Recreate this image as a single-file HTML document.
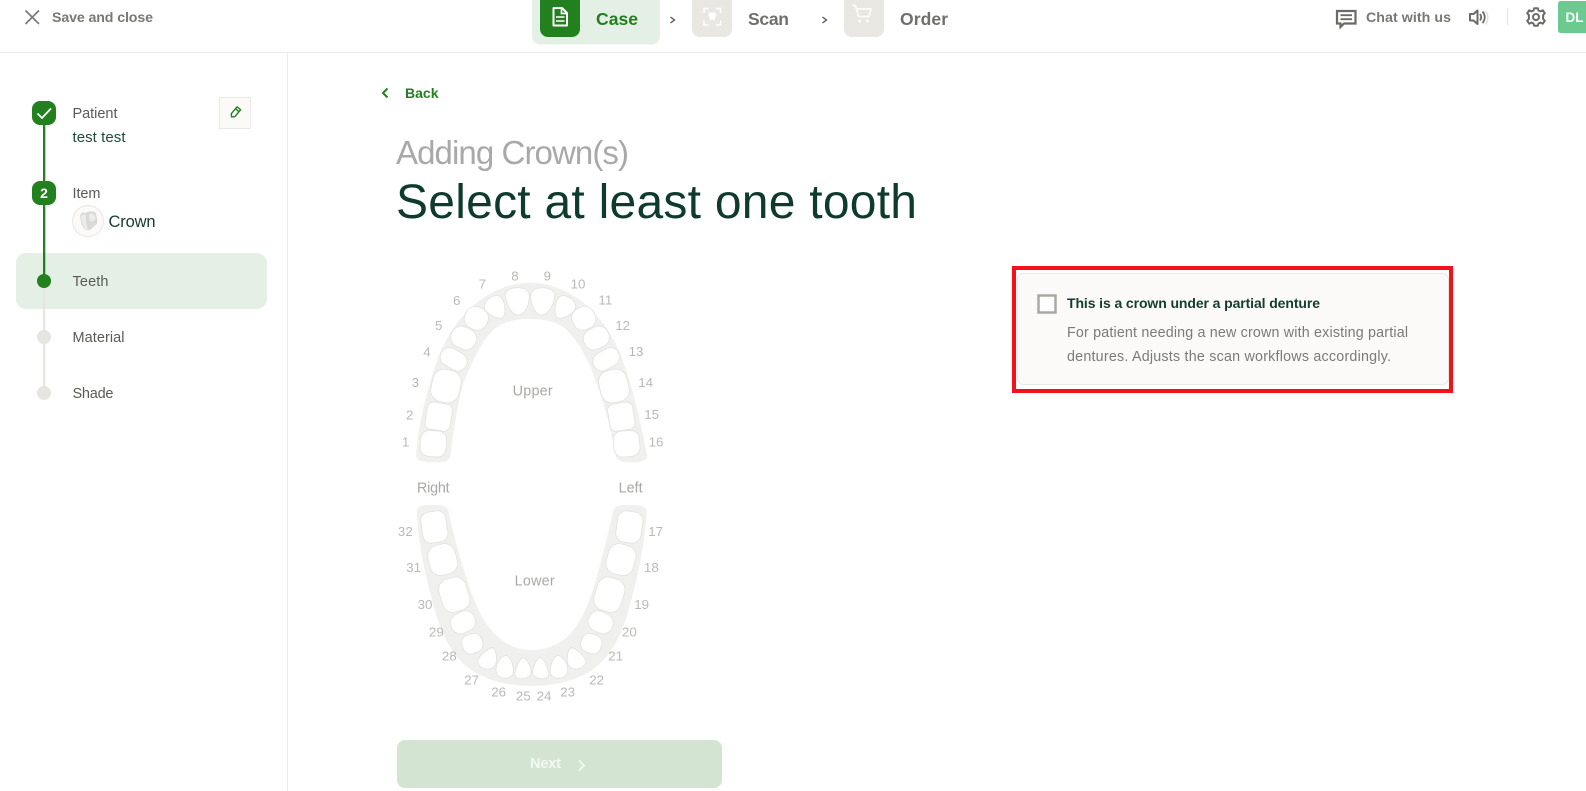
<!DOCTYPE html>
<html lang="en"><head><meta charset="utf-8"><title>Select at least one tooth</title>
<style>
html,body{margin:0;padding:0;background:#fff;width:1586px;height:791px;overflow:hidden}
svg{display:block;font-family:"Liberation Sans",sans-serif}
.nav{font-size:14.500px;fill:#5a5a56}
.num{font-size:40px;fill:#b9b9b6;text-anchor:middle}
.lab{font-size:43px;fill:#a8a8a5;text-anchor:middle}
.t rect,.t path{fill:#fff;stroke:#e2e2df;stroke-width:2.500}
</style></head><body>
<svg width="1586" height="791" viewBox="0 0 1586 791" xmlns="http://www.w3.org/2000/svg">
<defs>
<g id="ul" class="t">
<rect x="-39" y="-39" width="78" height="78" rx="26" transform="translate(130,551) rotate(5)"/>
<rect x="-38" y="-41" width="76" height="82" rx="18" transform="translate(146,470) rotate(9)"/>
<rect x="-43" y="-49" width="86" height="98" rx="34" transform="translate(168,378) rotate(12)"/>
<rect x="-42" y="-28" width="84" height="56" rx="27" transform="translate(191,298) rotate(30)"/>
<rect x="-39" y="-32" width="78" height="64" rx="30" transform="translate(221,234) rotate(25)"/>
<rect x="-35" y="-34" width="70" height="68" rx="30" transform="translate(259,175) rotate(25)"/>
<path d="M283 137C287 118 306 106 324 107C338 109 345 130 345 152C345 168 338 177 326 175C308 171 280 155 283 137Z"/>
<path d="M345 105C348 89 366 83 382 83C402 83 418 90 418 108C418 130 408 163 385 165C364 167 348 130 345 105Z"/>
</g>
<g id="ll" class="t">
<rect x="-38" y="-47" width="76" height="94" rx="26" transform="translate(133,171) rotate(-8)"/>
<rect x="-42" y="-46" width="84" height="92" rx="32" transform="translate(158,269) rotate(-15)"/>
<rect x="-42" y="-51" width="84" height="102" rx="32" transform="translate(193,374) rotate(-17)"/>
<rect x="-38" y="-31" width="76" height="62" rx="29" transform="translate(219,457) rotate(-25)"/>
<rect x="-31" y="-29" width="62" height="58" rx="24" transform="translate(247,521) rotate(-20)"/>
<path d="M263 572C270 555 292 535 308 533C320 540 322 572 316 585C308 600 285 600 272 590C265 584 261 578 263 572Z"/>
<path d="M318 597C320 577 335 555 350 557C364 563 372 592 370 608C366 625 345 628 332 623C323 617 317 608 318 597Z"/>
<path d="M375 608C378 590 390 563 400 563C410 563 425 592 423 610C421 628 385 630 378 622C375 618 374 613 375 608Z"/>
</g>
</defs>
<rect width="1586" height="791" fill="#fff"/>
<!-- header -->
<rect x="0" y="52" width="1586" height="1" fill="#ececea"/>
<rect x="287" y="52" width="1" height="739" fill="#ececea"/>
<path d="M25.500 10.500L39 24M39 10.500L25.500 24" stroke="#7a7a76" stroke-width="1.700" fill="none"/>
<text x="52" y="22" font-size="14.200" font-weight="700" fill="#777773" textLength="101" lengthAdjust="spacing">Save and close</text>

<rect x="532" y="-10" width="128" height="54.500" rx="8" fill="#e4f0e5"/>
<rect x="540" y="-10" width="40" height="47" rx="8" fill="#22801f"/>
<path d="M553.500 8H562L567 13V25.500H553.500Z" fill="none" stroke="#fff" stroke-width="2" stroke-linejoin="round"/>
<path d="M561.500 8V13.500H567" fill="none" stroke="#fff" stroke-width="1.700"/>
<path d="M556 17H564.500M556 21H564.500" stroke="#fff" stroke-width="1.600"/>
<text x="596" y="25" font-size="17.500" font-weight="700" fill="#22801f" textLength="42" lengthAdjust="spacing">Case</text>
<path d="M670.500 17L674.500 20L670.500 23" fill="none" stroke="#55554f" stroke-width="1.300"/>
<rect x="692" y="-10" width="40" height="47" rx="8" fill="#e8e7e2"/>
<path d="M704 13V8.500H708.500M716 8.500H720.500V13M720.500 20.500V25H716M708.500 25H704V20.500" fill="none" stroke="#fff" stroke-width="1.500"/>
<path d="M708.500 13.500C710 11.800 711 12.500 712.200 12.800C713.500 12.500 714.500 11.800 716 13.500C716.800 15.500 715 17 714.500 20.500C713.800 21.500 713 20 712.200 18.500C711.400 20 710.600 21.500 710 20.500C709.500 17 707.700 15.500 708.500 13.500Z" fill="#fff"/>
<text x="748" y="25" font-size="17.500" font-weight="700" fill="#6f6f6b" textLength="41" lengthAdjust="spacing">Scan</text>
<path d="M822.500 17L826.500 20L822.500 23" fill="none" stroke="#55554f" stroke-width="1.300"/>
<rect x="844" y="-10" width="40" height="47" rx="8" fill="#e8e7e2"/>
<path d="M852.500 5.500H855.500L858.500 16.500H869L871 9H856.500" fill="none" stroke="#fff" stroke-width="1.500"/>
<circle cx="859.500" cy="21" r="1.400" fill="#fff"/><circle cx="867.500" cy="21" r="1.400" fill="#fff"/>
<text x="900" y="25" font-size="17.500" font-weight="700" fill="#6f6f6b" textLength="48" lengthAdjust="spacing">Order</text>

<path d="M1337 11H1355.500V23.500H1344L1340.500 27V23.500H1337Z" fill="none" stroke="#6a6a66" stroke-width="2.200"/>
<path d="M1340.500 15.200H1352M1340.500 19.200H1352" stroke="#6a6a66" stroke-width="1.800"/>
<text x="1366" y="22" font-size="14.200" font-weight="700" fill="#777773" textLength="85" lengthAdjust="spacing">Chat with us</text>
<path d="M1470 14H1473.500L1477.500 10.500V24L1473.500 20.500H1470Z" fill="none" stroke="#6a6a66" stroke-width="2" stroke-linejoin="round"/>
<path d="M1480 14C1481.500 16 1481.500 18.500 1480 20.500M1482.500 11.500C1485.500 15 1485.500 19.500 1482.500 23" fill="none" stroke="#6a6a66" stroke-width="1.800"/>
<path d="M1485.500 10.500C1488.500 15 1488.500 20 1485.500 24.500" fill="none" stroke="#dfdfdd" stroke-width="1.400"/>
<rect x="1507" y="9" width="1" height="16" fill="#e2e2df"/>
<g transform="translate(1536,17)" fill="none" stroke="#6a6a66">
<circle r="3" stroke-width="2"/>
<path d="M-1.800 -8.800H1.800L2.500 -6.500L4.700 -5.600L6.800 -6.700L8.800 -3.700L7.100 -2L7.100 2L8.800 3.700L6.800 6.700L4.700 5.600L2.500 6.500L1.800 8.800H-1.800L-2.500 6.500L-4.700 5.600L-6.800 6.700L-8.800 3.700L-7.100 2L-7.100 -2L-8.800 -3.700L-6.800 -6.700L-4.700 -5.600L-2.500 -6.500Z" stroke-width="2" stroke-linejoin="round"/>
</g>
<path d="M1561 1H1586V33H1561Q1558 33 1558 30V4Q1558 1 1561 1Z" fill="#6cc98f"/>
<text x="1565.500" y="22" font-size="13.500" font-weight="700" fill="#fff">DL</text>

<!-- sidebar -->
<rect x="16" y="253" width="251" height="56" rx="10" fill="#e4f0e5"/>
<rect x="43" y="281" width="2.200" height="112" fill="#e6e5e0"/>
<rect x="43" y="120" width="2.300" height="160" fill="#22801f"/>
<rect x="32" y="101" width="24" height="24" rx="8" fill="#22801f"/>
<path d="M37.500 113.500L42 118L51 108.500" fill="none" stroke="#fff" stroke-width="1.800"/>
<rect x="32" y="181" width="24" height="24" rx="8" fill="#22801f"/>
<text x="44" y="198" font-size="14" font-weight="700" fill="#fff" text-anchor="middle">2</text>
<circle cx="44" cy="281" r="7" fill="#22801f"/>
<circle cx="44" cy="337" r="7" fill="#e6e5e0"/>
<circle cx="44" cy="393" r="7" fill="#e6e5e0"/>
<text class="nav" x="72.500" y="118" textLength="45" lengthAdjust="spacing">Patient</text>
<text x="72.500" y="142" font-size="15" fill="#1d4a3c" textLength="53" lengthAdjust="spacing">test test</text>
<text class="nav" x="72.500" y="198" textLength="28" lengthAdjust="spacing">Item</text>
<text class="nav" x="72.500" y="286" textLength="36" lengthAdjust="spacing">Teeth</text>
<text class="nav" x="72.500" y="342" textLength="52" lengthAdjust="spacing">Material</text>
<text class="nav" x="72.500" y="398" textLength="41" lengthAdjust="spacing">Shade</text>
<rect x="219.500" y="97.500" width="31" height="31" fill="#fbfaf8" stroke="#e8e8e4"/>
<g transform="translate(235.300,112.500) rotate(40)" fill="none" stroke="#22801f" stroke-width="1.400" stroke-linejoin="round">
<path d="M-2.300 -5.500H2.300V3.500L0 5.800L-2.300 3.500Z"/><path d="M-2.300 -3H2.300"/>
</g>
<circle cx="88" cy="221" r="15.500" fill="#fbfaf8" stroke="#e8e7e2"/>
<path d="M80 216C81 212 84 212 86 213C88 211 92 211 95 212C97 215 97.500 220 97 224C94 226 92 228 90 230C86 231 83 228 81.500 224Z" fill="#d9d9d7"/>
<path d="M89 214C92 213 95 214 95.500 218C95.500 221 92 222 90 221Z" fill="#ececea"/>
<path d="M81 217C82 214 85 214 86 215C86 220 86 226 88 229C85 230 83 226 81 217Z" fill="#ececeb"/>
<text x="108.500" y="227" font-size="16.500" fill="#143c30" textLength="47" lengthAdjust="spacing">Crown</text>

<!-- heading -->
<path d="M387.500 88.500L383 93L387.500 97.500" fill="none" stroke="#22801f" stroke-width="2"/>
<text x="405" y="98" font-size="14" font-weight="700" fill="#22801f" textLength="33.500" lengthAdjust="spacing">Back</text>
<text x="396" y="164" font-size="33" fill="#a9a9a9" textLength="233" lengthAdjust="spacing">Adding Crown(s)</text>
<text x="396" y="218" font-size="48" fill="#0f3a2e" textLength="521" lengthAdjust="spacing">Select at least one tooth</text>

<!-- upper arch -->
<g transform="translate(390,260) scale(.33333)">
<path fill="#f0f0ee" d="M78 585C85 500 105 410 135 320C160 240 205 170 270 120C320 85 370 68 420 68C470 68 520 85 570 120C635 170 680 240 705 320C735 410 755 500 771 585C772 600 760 607 730 607C700 608 685 605 678 590C665 530 650 450 620 370C600 310 570 250 530 210C500 183 460 177 420 177C380 177 340 183 310 210C270 250 245 310 220 370C200 440 190 520 181 590C176 605 160 607 125 607C95 607 77 600 78 585Z"/>
<use href="#ul"/>
<use href="#ul" transform="translate(840,0) scale(-1,1)"/>
<text class="num" x="47" y="560">1</text><text class="num" x="59" y="478">2</text><text class="num" x="76" y="381">3</text><text class="num" x="111" y="289">4</text><text class="num" x="146" y="210">5</text><text class="num" x="200" y="135">6</text><text class="num" x="277" y="86">7</text><text class="num" x="375" y="61">8</text><text class="num" x="472" y="61">9</text><text class="num" x="564" y="86">10</text><text class="num" x="646" y="134">11</text><text class="num" x="698" y="210">12</text><text class="num" x="738" y="288">13</text><text class="num" x="767" y="381">14</text><text class="num" x="785" y="477">15</text><text class="num" x="798" y="560">16</text>
<text class="lab" x="428" y="406" textLength="120" lengthAdjust="spacing">Upper</text>
</g>

<!-- lower arch -->
<g transform="translate(390,470) scale(.33333)">
<path fill="#f0f0ee" d="M80 122C82 108 100 105 125 105C150 104 168 106 175 122C190 190 205 250 235 340C260 420 290 475 335 510C365 532 395 540 425 540C455 540 490 532 520 510C565 475 590 420 615 340C640 250 655 190 670 120C675 106 695 105 720 105C750 105 768 108 770 122C765 220 745 320 710 440C680 530 640 590 570 620C520 642 470 648 425 648C380 648 330 642 280 620C210 590 170 530 140 440C105 320 85 220 80 122Z"/>
<use href="#ll"/>
<use href="#ll" transform="translate(851,0) scale(-1,1)"/>
<text class="num" x="46" y="198">32</text><text class="num" x="71" y="306">31</text><text class="num" x="105" y="417">30</text><text class="num" x="139" y="499">29</text><text class="num" x="178" y="572">28</text><text class="num" x="245" y="643">27</text><text class="num" x="326" y="679">26</text><text class="num" x="400" y="692">25</text><text class="num" x="462" y="692">24</text><text class="num" x="533" y="679">23</text><text class="num" x="620" y="643">22</text><text class="num" x="677" y="572">21</text><text class="num" x="718" y="499">20</text><text class="num" x="755" y="417">19</text><text class="num" x="784" y="306">18</text><text class="num" x="797" y="198">17</text>
<text class="lab" x="130" y="67" textLength="98" lengthAdjust="spacing">Right</text>
<text class="lab" x="722" y="67" textLength="72" lengthAdjust="spacing">Left</text>
<text class="lab" x="434" y="347" textLength="120" lengthAdjust="spacing">Lower</text>
</g>

<!-- next -->
<rect x="397" y="740" width="325" height="48" rx="8" fill="#d3e5d2"/>
<text x="530" y="768" font-size="14.500" font-weight="700" fill="#f4f8f3" textLength="31" lengthAdjust="spacing">Next</text>
<path d="M579 760.500L584 765.500L579 770.500" fill="none" stroke="#f4f8f3" stroke-width="1.800"/>

<!-- card -->
<rect x="1017.500" y="273.500" width="431" height="111" rx="6" fill="#fbfaf8" stroke="#e8e8e4"/>
<rect x="1014" y="268" width="437" height="123" fill="none" stroke="#f5111b" stroke-width="4"/>
<rect x="1038.500" y="295.500" width="17" height="17" fill="#fff" stroke="#a9a9a3" stroke-width="2.500"/>
<text x="1067" y="308" font-size="14" font-weight="700" fill="#143c30" textLength="253" lengthAdjust="spacing">This is a crown under a partial denture</text>
<text x="1067" y="337" font-size="14.300" fill="#7a7a76" textLength="341" lengthAdjust="spacing">For patient needing a new crown with existing partial</text>
<text x="1067" y="361" font-size="14.300" fill="#7a7a76" textLength="324" lengthAdjust="spacing">dentures. Adjusts the scan workflows accordingly.</text>
</svg>
</body></html>
